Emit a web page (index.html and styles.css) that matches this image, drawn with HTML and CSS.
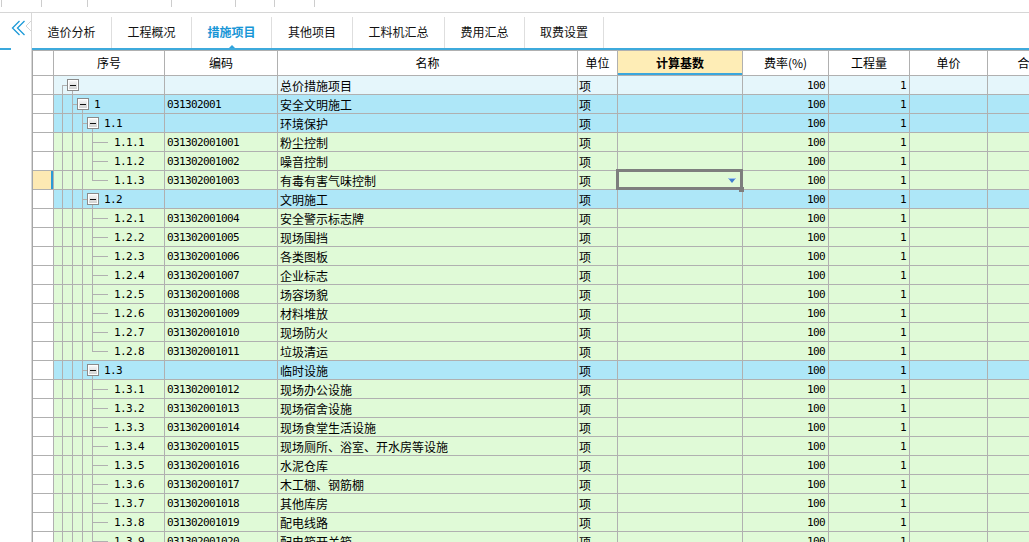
FILE: index.html
```html
<!DOCTYPE html>
<html lang="zh-CN">
<head>
<meta charset="utf-8">
<title>措施项目</title>
<link rel="stylesheet" href="styles.css">
</head>
<body>
<div class="topstrip">
  <div class="ts ts-a"></div><div class="ts ts-b"></div><div class="ts ts-c"></div><div class="ts ts-d"></div><div class="ts ts-e"></div><div class="ts ts-f"></div><div class="ts ts-g"></div>
</div>
<div class="main">
  <div class="side">
    <div class="side-head">
      <svg width="31" height="35" viewBox="0 0 31 35">
        <polyline points="19.5,8 12.5,15 19.5,22" fill="none" stroke="#1d9ad8" stroke-width="1.3"/>
        <polyline points="24.5,8 17.5,15 24.5,22" fill="none" stroke="#1d9ad8" stroke-width="1.3"/>
        <polyline points="31,8 26,13 31,18" fill="none" stroke="#d4d4d4" stroke-width="1"/>
      </svg>
    </div>
    <div class="side-bar"></div>
  </div>
  <div class="content">
    <div class="tabs">
      <div class="tab t1"><span class="lbl">造价分析</span></div>
      <div class="tab t2"><span class="lbl">工程概况</span></div>
      <div class="tab t3 active"><span class="lbl">措施项目</span></div>
      <div class="tab t4"><span class="lbl">其他项目</span></div>
      <div class="tab t5"><span class="lbl">工料机汇总</span></div>
      <div class="tab t6"><span class="lbl">费用汇总</span></div>
      <div class="tab t7"><span class="lbl">取费设置</span></div>
    </div>
    <div class="grid">
      <div class="row hdr">
        <div class="rh"></div><div>序号</div><div>编码</div><div>名称</div><div>单位</div><div class="hbase">计算基数</div><div>费率(%)</div><div>工程量</div><div>单价</div><div>合价</div>
      </div>

      <div class="row root"><div class="rh"></div><div class="seq"><span class="tb"></span></div><div class="code mono"></div><div class="name">总价措施项目</div><div class="unit">项</div><div></div><div class="num mono">100</div><div class="num mono">1</div><div></div><div></div></div>
      <div class="row g1"><div class="rh"></div><div class="seq"><span class="tb"></span><span class="sn mono">1</span></div><div class="code mono">031302001</div><div class="name">安全文明施工</div><div class="unit">项</div><div></div><div class="num mono">100</div><div class="num mono">1</div><div></div><div></div></div>
      <div class="row g2"><div class="rh"></div><div class="seq"><span class="tb"></span><span class="sn mono">1.1</span></div><div class="code mono"></div><div class="name">环境保护</div><div class="unit">项</div><div></div><div class="num mono">100</div><div class="num mono">1</div><div></div><div></div></div>
      <div class="row leaf"><div class="rh"></div><div class="seq"><span class="sn mono">1.1.1</span></div><div class="code mono">031302001001</div><div class="name">粉尘控制</div><div class="unit">项</div><div></div><div class="num mono">100</div><div class="num mono">1</div><div></div><div></div></div>
      <div class="row leaf"><div class="rh"></div><div class="seq"><span class="sn mono">1.1.2</span></div><div class="code mono">031302001002</div><div class="name">噪音控制</div><div class="unit">项</div><div></div><div class="num mono">100</div><div class="num mono">1</div><div></div><div></div></div>
      <div class="row leaf last selected"><div class="rh"></div><div class="seq"><span class="sn mono">1.1.3</span></div><div class="code mono">031302001003</div><div class="name">有毒有害气味控制</div><div class="unit">项</div><div class="sel-cell"><svg class="dd" width="8" height="5" viewBox="0 0 8 5"><polygon points="0,0 8,0 4,5" fill="#3f7fcf"/><rect x="0" y="0" width="8" height="1" fill="#9cc2ec"/></svg></div><div class="num mono">100</div><div class="num mono">1</div><div></div><div></div></div>
      <div class="row g2"><div class="rh"></div><div class="seq"><span class="tb"></span><span class="sn mono">1.2</span></div><div class="code mono"></div><div class="name">文明施工</div><div class="unit">项</div><div></div><div class="num mono">100</div><div class="num mono">1</div><div></div><div></div></div>
      <div class="row leaf"><div class="rh"></div><div class="seq"><span class="sn mono">1.2.1</span></div><div class="code mono">031302001004</div><div class="name">安全警示标志牌</div><div class="unit">项</div><div></div><div class="num mono">100</div><div class="num mono">1</div><div></div><div></div></div>
      <div class="row leaf"><div class="rh"></div><div class="seq"><span class="sn mono">1.2.2</span></div><div class="code mono">031302001005</div><div class="name">现场围挡</div><div class="unit">项</div><div></div><div class="num mono">100</div><div class="num mono">1</div><div></div><div></div></div>
      <div class="row leaf"><div class="rh"></div><div class="seq"><span class="sn mono">1.2.3</span></div><div class="code mono">031302001006</div><div class="name">各类图板</div><div class="unit">项</div><div></div><div class="num mono">100</div><div class="num mono">1</div><div></div><div></div></div>
      <div class="row leaf"><div class="rh"></div><div class="seq"><span class="sn mono">1.2.4</span></div><div class="code mono">031302001007</div><div class="name">企业标志</div><div class="unit">项</div><div></div><div class="num mono">100</div><div class="num mono">1</div><div></div><div></div></div>
      <div class="row leaf"><div class="rh"></div><div class="seq"><span class="sn mono">1.2.5</span></div><div class="code mono">031302001008</div><div class="name">场容场貌</div><div class="unit">项</div><div></div><div class="num mono">100</div><div class="num mono">1</div><div></div><div></div></div>
      <div class="row leaf"><div class="rh"></div><div class="seq"><span class="sn mono">1.2.6</span></div><div class="code mono">031302001009</div><div class="name">材料堆放</div><div class="unit">项</div><div></div><div class="num mono">100</div><div class="num mono">1</div><div></div><div></div></div>
      <div class="row leaf"><div class="rh"></div><div class="seq"><span class="sn mono">1.2.7</span></div><div class="code mono">031302001010</div><div class="name">现场防火</div><div class="unit">项</div><div></div><div class="num mono">100</div><div class="num mono">1</div><div></div><div></div></div>
      <div class="row leaf last"><div class="rh"></div><div class="seq"><span class="sn mono">1.2.8</span></div><div class="code mono">031302001011</div><div class="name">垃圾清运</div><div class="unit">项</div><div></div><div class="num mono">100</div><div class="num mono">1</div><div></div><div></div></div>
      <div class="row g2"><div class="rh"></div><div class="seq"><span class="tb"></span><span class="sn mono">1.3</span></div><div class="code mono"></div><div class="name">临时设施</div><div class="unit">项</div><div></div><div class="num mono">100</div><div class="num mono">1</div><div></div><div></div></div>
      <div class="row leaf"><div class="rh"></div><div class="seq"><span class="sn mono">1.3.1</span></div><div class="code mono">031302001012</div><div class="name">现场办公设施</div><div class="unit">项</div><div></div><div class="num mono">100</div><div class="num mono">1</div><div></div><div></div></div>
      <div class="row leaf"><div class="rh"></div><div class="seq"><span class="sn mono">1.3.2</span></div><div class="code mono">031302001013</div><div class="name">现场宿舍设施</div><div class="unit">项</div><div></div><div class="num mono">100</div><div class="num mono">1</div><div></div><div></div></div>
      <div class="row leaf"><div class="rh"></div><div class="seq"><span class="sn mono">1.3.3</span></div><div class="code mono">031302001014</div><div class="name">现场食堂生活设施</div><div class="unit">项</div><div></div><div class="num mono">100</div><div class="num mono">1</div><div></div><div></div></div>
      <div class="row leaf"><div class="rh"></div><div class="seq"><span class="sn mono">1.3.4</span></div><div class="code mono">031302001015</div><div class="name">现场厕所、浴室、开水房等设施</div><div class="unit">项</div><div></div><div class="num mono">100</div><div class="num mono">1</div><div></div><div></div></div>
      <div class="row leaf"><div class="rh"></div><div class="seq"><span class="sn mono">1.3.5</span></div><div class="code mono">031302001016</div><div class="name">水泥仓库</div><div class="unit">项</div><div></div><div class="num mono">100</div><div class="num mono">1</div><div></div><div></div></div>
      <div class="row leaf"><div class="rh"></div><div class="seq"><span class="sn mono">1.3.6</span></div><div class="code mono">031302001017</div><div class="name">木工棚、钢筋棚</div><div class="unit">项</div><div></div><div class="num mono">100</div><div class="num mono">1</div><div></div><div></div></div>
      <div class="row leaf"><div class="rh"></div><div class="seq"><span class="sn mono">1.3.7</span></div><div class="code mono">031302001018</div><div class="name">其他库房</div><div class="unit">项</div><div></div><div class="num mono">100</div><div class="num mono">1</div><div></div><div></div></div>
      <div class="row leaf"><div class="rh"></div><div class="seq"><span class="sn mono">1.3.8</span></div><div class="code mono">031302001019</div><div class="name">配电线路</div><div class="unit">项</div><div></div><div class="num mono">100</div><div class="num mono">1</div><div></div><div></div></div>
      <div class="row leaf"><div class="rh"></div><div class="seq"><span class="sn mono">1.3.9</span></div><div class="code mono">031302001020</div><div class="name">配电箱开关箱</div><div class="unit">项</div><div></div><div class="num mono">100</div><div class="num mono">1</div><div></div><div></div></div>
    </div>
  </div>
</div>
</body>
</html>
```

FILE: styles.css
```css
* { box-sizing: border-box; }
html, body { margin: 0; padding: 0; }
body {
  width: 1029px;
  height: 542px;
  overflow: hidden;
  background: #fff;
  color: #000;
  font-family: "Noto Sans CJK SC", "Noto Sans", sans-serif;
  font-size: 12px;
}

/* top strip */
.topstrip {
  height: 13px;
  border-bottom: 1px solid #d6d6d6;
  display: flex;
  padding-left: 1px;
}
.ts { height: 7px; border-left: 1px solid #cdcdcd; flex: none; }
.ts-a { width: 40px; }
.ts-b { width: 46px; }
.ts-c { width: 84px; }
.ts-d { width: 64px; }
.ts-e { width: 39px; }
.ts-f { width: 40px; }
.ts-g { width: 1px; }

.main { display: flex; height: 529px; }

/* side */
.side { width: 32px; flex: none; border-right: 1px solid #d8d8d8; }
.side-head { height: 35px; }
.side-head svg { display: block; }
.side-bar { width: 11px; height: 2px; background: #3aa8dc; }

.content { flex: 1; min-width: 0; overflow: hidden; }

/* tabs */
.tabs {
  display: flex;
  height: 37px;
  padding-top: 4px;
  border-bottom: 2px solid #3eaadc;
}
.tab {
  display: grid;
  grid-template-rows: 1fr 3px;
  justify-items: center;
  align-items: center;
  border-right: 1px solid #dedede;
  flex: none;
  color: #111;
}
.tab .lbl { padding-top: 2px; line-height: 16px; }
.tab::after {
  content: "";
  width: 0;
  height: 0;
  border-left: 3px solid transparent;
  border-right: 3px solid transparent;
  border-bottom: 3px solid transparent;
}
.tab.active { color: #1796d6; font-weight: bold; }
.tab.active::after { border-bottom-color: #2ea2dc; }
.t1 { width: 80px; }
.t2 { width: 80px; }
.t3 { width: 80px; }
.t4 { width: 81px; }
.t5 { width: 92px; }
.t6 { width: 80px; }
.t7 { width: 79px; }

/* grid */
.grid {
  border-left: 1px solid #a6a6a6;
  border-top: 1px solid #b0b0b0;
}
.row {
  display: grid;
  grid-template-columns: 21px 111px 113px 300px 40px 125px 86px 81px 78px 84px;
  height: 19px;
}
.row > div {
  border-right: 1px solid #b0b0b0;
  border-bottom: 1px solid #b0b0b0;
  overflow: hidden;
  white-space: nowrap;
  line-height: 18px;
}
.hdr { height: 25px; }
.hdr > div { line-height: 24px; text-align: center; background: #fff; }
.hdr .hbase {
  background: #feedb6;
  font-weight: bold;
  box-shadow: inset 0 -2px 0 #3aa6dc;
}

.root { background: #e5f6fb; }
.g1, .g2 { background: #aee7f8; }
.leaf { background: #e0fad7; }

.row .rh { background: #fff; }
.selected .rh { background: #fde9b3; box-shadow: inset -2px 0 0 #2c9ad6; }

.mono {
  font-family: "DejaVu Sans Mono", "Liberation Mono", monospace;
  font-size: 11px;
  letter-spacing: -0.62px;
}
.row > .code, .row > .name, .row > .unit, .row > .num {
  padding-top: 1px;
  line-height: 17px;
}
.code { padding-left: 2px; }
.name { padding-left: 2px; }
.unit { padding-left: 1px; }
.num { text-align: right; padding-right: 3px; }

/* tree column */
.seq {
  display: flex;
  align-items: center;
  background-repeat: no-repeat;
}
.root .seq {
  padding-left: 13px;
  background-image:
    linear-gradient(#b0b0b0, #b0b0b0),
    linear-gradient(#b0b0b0, #b0b0b0),
    linear-gradient(#b0b0b0, #b0b0b0);
  background-position: 8px 9px, 8px 9px, 18px 15px;
  background-size: 1px 100%, 5px 1px, 1px 100%;
}
.g1 .seq {
  padding-left: 23px;
  background-image:
    linear-gradient(#b0b0b0, #b0b0b0),
    linear-gradient(#b0b0b0, #b0b0b0),
    linear-gradient(#b0b0b0, #b0b0b0),
    linear-gradient(#b0b0b0, #b0b0b0);
  background-position: 8px 0, 18px 0, 18px 9px, 28px 15px;
  background-size: 1px 100%, 1px 100%, 5px 1px, 1px 100%;
}
.g2 .seq {
  padding-left: 33px;
  background-image:
    linear-gradient(#b0b0b0, #b0b0b0),
    linear-gradient(#b0b0b0, #b0b0b0),
    linear-gradient(#b0b0b0, #b0b0b0),
    linear-gradient(#b0b0b0, #b0b0b0),
    linear-gradient(#b0b0b0, #b0b0b0);
  background-position: 8px 0, 18px 0, 28px 0, 28px 9px, 38px 15px;
  background-size: 1px 100%, 1px 100%, 1px 100%, 5px 1px, 1px 100%;
}
.leaf .seq {
  padding-left: 60px;
  background-image:
    linear-gradient(#b0b0b0, #b0b0b0),
    linear-gradient(#b0b0b0, #b0b0b0),
    linear-gradient(#b0b0b0, #b0b0b0),
    linear-gradient(#b0b0b0, #b0b0b0),
    linear-gradient(#b0b0b0, #b0b0b0);
  background-position: 8px 0, 18px 0, 28px 0, 38px 0, 38px 9px;
  background-size: 1px 100%, 1px 100%, 1px 100%, 1px 100%, 16px 1px;
}
.leaf.last .seq {
  background-size: 1px 100%, 1px 100%, 1px 100%, 1px 10px, 16px 1px;
}
.tb {
  flex: none;
  width: 12px;
  height: 12px;
  border: 1px solid #8a8a8a;
  background: linear-gradient(#fbfbfb, #cdcdcd);
  box-shadow: inset 0 0 0 1px #fff;
  display: flex;
  align-items: center;
  justify-content: center;
}
.tb::after { content: ""; width: 6px; height: 1px; background: #111; }
.sn { margin-top: 2px; }
.g1 .sn, .g2 .sn { margin-left: 5px; }

/* selected cell with dropdown */
.row > .sel-cell {
  position: relative;
  overflow: visible;
  display: flex;
  align-items: center;
  justify-content: flex-end;
  padding-right: 6px;
}
.sel-cell::before {
  content: "";
  position: absolute;
  left: -2px;
  top: -2px;
  right: -1px;
  bottom: -1px;
  border: 3px solid #7e7e7e;
  z-index: 2;
  pointer-events: none;
}
.sel-cell::after {
  content: "";
  position: absolute;
  right: -2px;
  bottom: -3px;
  width: 5px;
  height: 5px;
  background: #7e7e7e;
  z-index: 3;
}
.dd { display: block; }
```
